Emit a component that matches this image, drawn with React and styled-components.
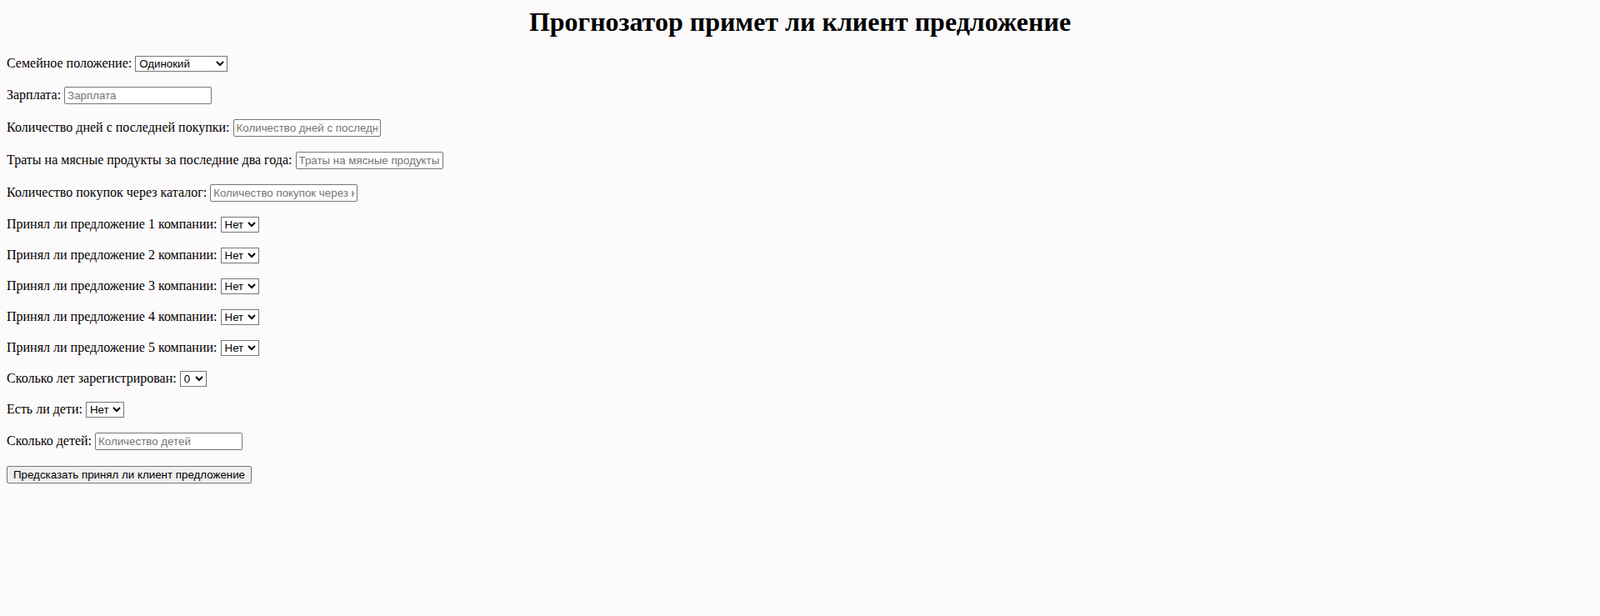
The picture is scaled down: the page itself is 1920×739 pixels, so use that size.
import React, { useState } from "react"
import styled, { createGlobalStyle } from "styled-components"

const GlobalStyle = createGlobalStyle`
    html, body {
        background: #fcfafb;
    }
    body {
        margin: 8px;
        font-family: "Liberation Serif", "Times New Roman", serif;
        font-size: 16px;
        color: #000;
    }
`

const yesNo = ["Нет", "Да"]

const fields = [
    { name: "marital", label: "Семейное положение:", type: "select", options: ["Одинокий", "Женат/Замужем", "Разведён", "Вдовец"], width: 111 },
    { name: "income", label: "Зарплата:", type: "input", placeholder: "Зарплата" },
    { name: "recency", label: "Количество дней с последней покупки:", type: "input", placeholder: "Количество дней с последней покупки" },
    { name: "meat", label: "Траты на мясные продукты за последние два года:", type: "input", placeholder: "Траты на мясные продукты" },
    { name: "catalog", label: "Количество покупок через каталог:", type: "input", placeholder: "Количество покупок через каталог" },
    { name: "cmp1", label: "Принял ли предложение 1 компании:", type: "select", options: yesNo, width: 46 },
    { name: "cmp2", label: "Принял ли предложение 2 компании:", type: "select", options: yesNo, width: 46 },
    { name: "cmp3", label: "Принял ли предложение 3 компании:", type: "select", options: yesNo, width: 46 },
    { name: "cmp4", label: "Принял ли предложение 4 компании:", type: "select", options: yesNo, width: 46 },
    { name: "cmp5", label: "Принял ли предложение 5 компании:", type: "select", options: yesNo, width: 46 },
    { name: "years", label: "Сколько лет зарегистрирован:", type: "select", options: ["0", "1", "2", "3"], width: 32 },
    { name: "haveKids", label: "Есть ли дети:", type: "select", options: yesNo, width: 46 },
    { name: "kids", label: "Сколько детей:", type: "input", placeholder: "Количество детей" },
]

export default function App() {
    const [values, setValues] = useState({})

    function change(name, value) {
        setValues({ ...values, [name]: value })
    }

    return (
        <>
            <GlobalStyle />
            <Title>Прогнозатор примет ли клиент предложение</Title>
            <form onSubmit={(e) => e.preventDefault()}>
                {fields.map((f) =>
                    <Row key={f.name} $line={f.type === "select" ? 21 : 23}>
                        <label htmlFor={f.name}>{f.label}</label>{" "}
                        {f.type === "select" ?
                            <Select
                                id={f.name}
                                $width={f.width}
                                value={values[f.name] || f.options[0]}
                                onChange={(e) => change(f.name, e.target.value)}
                            >
                                {f.options.map((o) => <option key={o} value={o}>{o}</option>)}
                            </Select>
                            :
                            <Input
                                id={f.name}
                                placeholder={f.placeholder}
                                value={values[f.name] || ""}
                                onChange={(e) => change(f.name, e.target.value)}
                            />
                        }
                    </Row>)}
                <Row $line={25}>
                    <Submit type="submit">Предсказать принял ли клиент предложение</Submit>
                </Row>
            </form>
        </>
    )
}

const Title = styled.h1`
    margin: 0 0 20px;
    text-align: center;
    font-size: 32px;
    font-weight: bold;
`

const Row = styled.p`
    margin: 16px 0;
    line-height: ${(p) => p.$line}px;
`

const Input = styled.input`
    box-sizing: border-box;
    width: 177px;
    height: 21px;
    padding: 1px 3px;
    border: 1px solid #767676;
    border-radius: 2px;
    background: #fff;
    font-family: "Liberation Sans", Arial, sans-serif;
    font-size: 13.33px;
    color: #000;
    &::placeholder {
        color: #757575;
    }
`

const Select = styled.select`
    box-sizing: border-box;
    width: ${(p) => p.$width}px;
    height: 19px;
    border: 1px solid #767676;
    border-radius: 0;
    background: #fff;
    font-family: "Liberation Sans", Arial, sans-serif;
    font-size: 13.33px;
    color: #000;
`

const Submit = styled.button`
    box-sizing: border-box;
    height: 21px;
    padding: 1px 7px;
    border: 1px solid #767676;
    border-radius: 2px;
    background: #efefef;
    white-space: nowrap;
    font-family: "Liberation Sans", Arial, sans-serif;
    font-size: 13.33px;
    color: #000;
`
